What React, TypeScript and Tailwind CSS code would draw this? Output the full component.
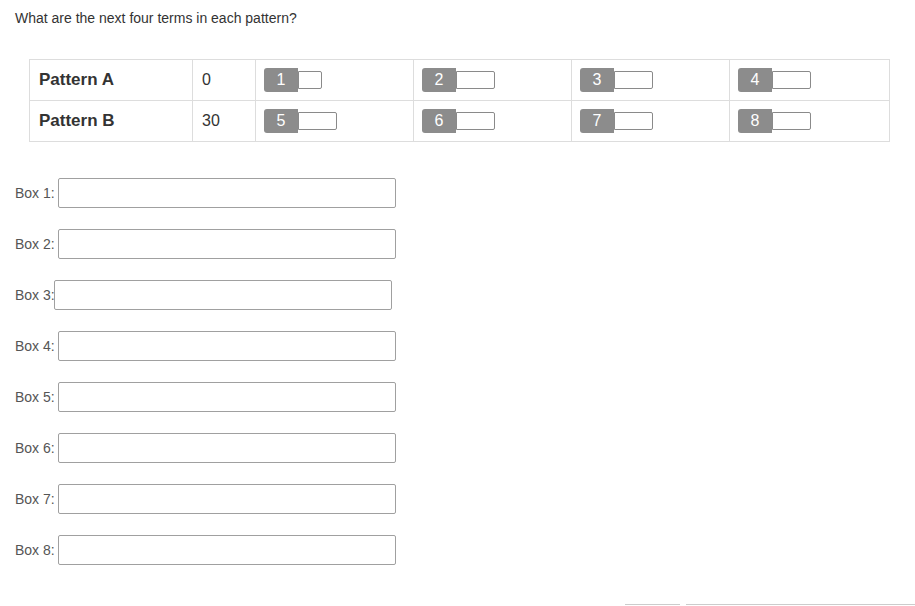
import React from "react";

const rows = [
  { name: "Pattern A", start: "0", boxes: [1, 2, 3, 4], firstW: 24 },
  { name: "Pattern B", start: "30", boxes: [5, 6, 7, 8], firstW: 39 },
];

function Slot({ n, w }: { n: number; w: number }) {
  return (
    <div className="flex items-center">
      <div className="w-[34px] h-[24px] bg-[#8c8c8c] text-white text-[16px] leading-[24px] text-center rounded-l-[3px]">
        {n}
      </div>
      <div
        className="h-[18px] border border-[#8a8a8a] rounded-r-[2px] bg-white"
        style={{ width: w }}
      />
    </div>
  );
}

export default function App() {
  return (
    <div
      className="h-[606px] w-[915px] bg-white flex flex-col overflow-hidden text-[#333]"
      style={{ fontFamily: '"Liberation Sans", Arial, sans-serif' }}
    >
      <div className="pl-[15px] pt-[10px] text-[14px] leading-[16px] text-[#333]">
        What are the next four terms in each pattern?
      </div>
      <div className="pl-[29px] pt-[33px]">
        <table className="border-collapse w-[860px] table-fixed">
          <colgroup>
            <col className="w-[163px]" />
            <col className="w-[63px]" />
            <col className="w-[158px]" />
            <col className="w-[158px]" />
            <col className="w-[158px]" />
            <col className="w-[160px]" />
          </colgroup>
          <tbody>
            {rows.map((r) => (
              <tr key={r.name} className="h-[41px]">
                <td className="border border-[#dddddd] pl-[9px] text-[17px] leading-[20px] font-bold text-[#333]">
                  {r.name}
                </td>
                <td className="border border-[#dddddd] pl-[9px] text-[16px] leading-[20px] text-[#333]">
                  {r.start}
                </td>
                {r.boxes.map((b, i) => (
                  <td key={b} className="border border-[#dddddd] pl-[8px]">
                    <Slot n={b} w={i === 0 ? r.firstW : 39} />
                  </td>
                ))}
              </tr>
            ))}
          </tbody>
        </table>
      </div>
      <div className="pl-[15px] pt-[36px] flex flex-col gap-[21px]">
        {[1, 2, 3, 4, 5, 6, 7, 8].map((n) => (
          <div key={n} className="flex items-center h-[30px]">
            <span className="text-[14px] text-[#555]">Box {n}:</span>
            <div
              className={
                "h-[30px] w-[338px] border border-[#a0a0a0] rounded-[2px] bg-white " +
                (n === 3 ? "-ml-[1px]" : "ml-[3px]")
              }
            />
          </div>
        ))}
      </div>
      <div className="mt-auto flex h-[2px]">
        <div className="ml-[625px] w-[55px] border-t border-[#cccccc]" />
        <div className="ml-[6px] flex-1 border-t border-[#cccccc]" />
      </div>
    </div>
  );
}
